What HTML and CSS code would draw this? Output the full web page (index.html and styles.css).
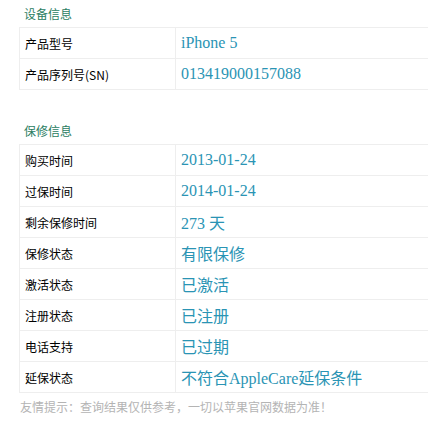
FILE: index.html
```html
<!DOCTYPE html>
<html lang="zh-CN">
<head>
<meta charset="utf-8">
<title>查询结果</title>
<link rel="stylesheet" href="styles.css">
</head>
<body>
<div class="page">
  <h2 class="section-title">设备信息</h2>
  <div class="info">
    <div class="row"><div class="label">产品型号</div><div class="value">iPhone 5</div></div>
    <div class="row"><div class="label">产品序列号(SN)</div><div class="value">013419000157088</div></div>
  </div>

  <h2 class="section-title spaced">保修信息</h2>
  <div class="info">
    <div class="row"><div class="label">购买时间</div><div class="value">2013-01-24</div></div>
    <div class="row"><div class="label">过保时间</div><div class="value">2014-01-24</div></div>
    <div class="row"><div class="label">剩余保修时间</div><div class="value">273 天</div></div>
    <div class="row"><div class="label">保修状态</div><div class="value">有限保修</div></div>
    <div class="row"><div class="label">激活状态</div><div class="value">已激活</div></div>
    <div class="row"><div class="label">注册状态</div><div class="value">已注册</div></div>
    <div class="row"><div class="label">电话支持</div><div class="value">已过期</div></div>
    <div class="row"><div class="label">延保状态</div><div class="value">不符合AppleCare延保条件</div></div>
  </div>
  <p class="tip">友情提示：查询结果仅供参考，一切以苹果官网数据为准！</p>
</div>
</body>
</html>
```

FILE: styles.css
```css
html, body {
  margin: 0;
  padding: 0;
  background: #fff;
  overflow: hidden;
}

.page {
  width: 428px;
  overflow: hidden;
  font-family: "Noto Sans CJK SC", "Noto Sans", sans-serif;
}

.section-title {
  margin: 0;
  height: 27px;
  line-height: 27px;
  padding-left: 24px;
  font-size: 12px;
  font-weight: normal;
  color: #2a7d62;
}

.section-title.spaced {
  margin-top: 27px;
}

.info {
  margin-left: 19px;
  width: 460px;
  border-top: 1px solid #eeeeee;
  border-left: 1px solid #eeeeee;
}

.row {
  display: flex;
  align-items: center;
  height: 30px;
  border-bottom: 1px solid #eeeeee;
}

.label {
  box-sizing: border-box;
  width: 156px;
  height: 100%;
  display: flex;
  align-items: center;
  padding-left: 5px;
  border-right: 1px solid #eeeeee;
  font-size: 12px;
  color: #000;
}

.value {
  padding-left: 5px;
  font-family: "Liberation Serif", "Noto Sans CJK SC", serif;
  font-size: 16px;
  color: #2a94b4;
  white-space: nowrap;
}

.tip {
  margin: 0;
  height: 28px;
  line-height: 28px;
  padding-left: 20px;
  font-size: 12px;
  color: #b4b4b4;
}
```
